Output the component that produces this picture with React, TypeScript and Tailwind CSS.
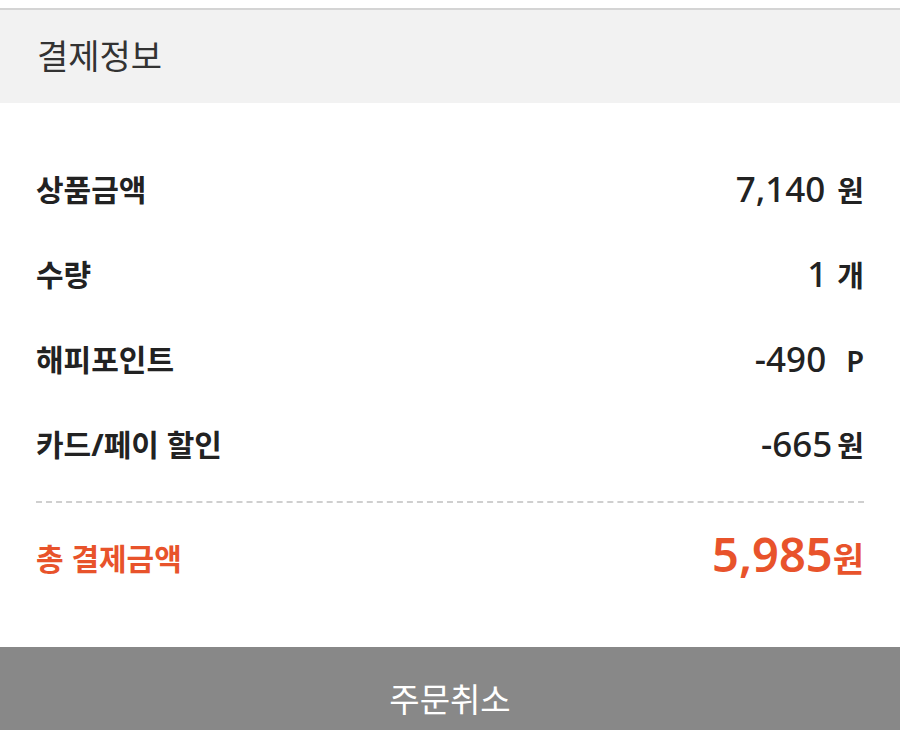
const FONT = "font-['Noto_Sans','Noto_Sans_CJK_KR',sans-serif]";

const ROWS = [
  { label: "상품금액", value: "7,140", unit: "원", gap: "ml-[12px]" },
  { label: "수량", value: "1", unit: "개", gap: "ml-[10px]" },
  { label: "해피포인트", value: "-490", unit: "P", gap: "ml-[20px]" },
  { label: "카드/페이 할인", value: "-665", unit: "원", gap: "ml-[5px]" },
];

export default function App() {
  return (
    <div className={`${FONT} flex h-[730px] w-[900px] flex-col bg-white text-[#222]`}>
      {/* Header */}
      <div className="mt-2 border-t-2 border-[#d4d4d4] bg-[#f2f2f2]">
        <div className="flex h-[93px] items-center px-[37px] text-[34px] text-[#333]">
          결제정보
        </div>
      </div>

      {/* Rows */}
      <div className="flex flex-1 flex-col px-9 pt-[44px]">
        {ROWS.map((r) => (
          <div key={r.label} className="flex h-[85px] items-center justify-between">
            <span className="text-[30px] font-bold">{r.label}</span>
            <span className="flex items-baseline text-[35px] font-medium">
              {r.value}
              <span className={`${r.gap} text-[29px] font-semibold`}>{r.unit}</span>
            </span>
          </div>
        ))}

        <div className="mt-[14px] border-t-2 border-dashed border-[#cfcfcf]" />

        <div className="flex h-[110px] items-center justify-between text-[#e8532b]">
          <span className="text-[30px] font-bold">총 결제금액</span>
          <span className="flex items-baseline">
            <span className="text-[47px] font-semibold leading-none">5,985</span>
            <span className="text-[34px] font-bold">원</span>
          </span>
        </div>
      </div>

      {/* Cancel button */}
      <button className="flex h-[83px] w-full items-center justify-center bg-[#888888] pt-[22px] text-[33px] text-white">
        주문취소
      </button>
    </div>
  );
}
